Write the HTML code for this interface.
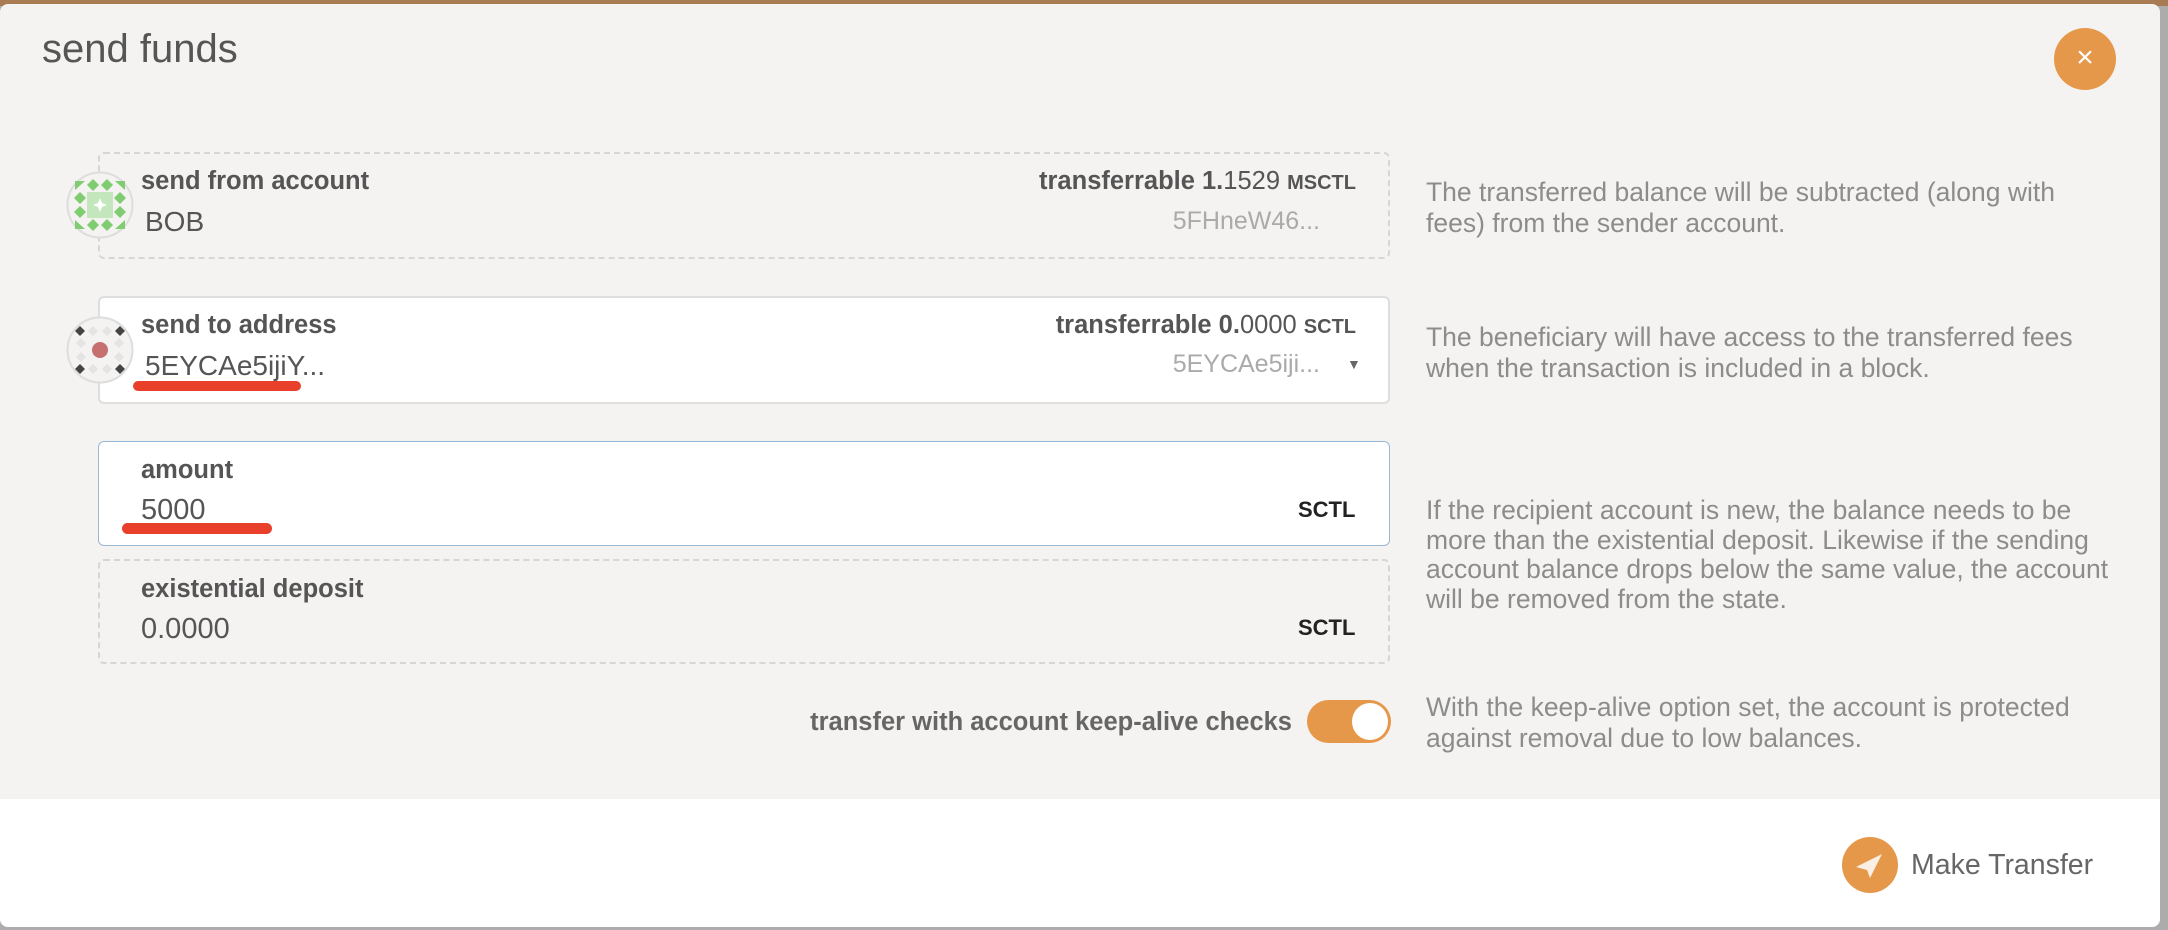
<!DOCTYPE html>
<html><head><meta charset="utf-8"><style>
*{margin:0;padding:0;box-sizing:border-box}
body{width:2168px;height:930px;overflow:hidden;background:#acacac;font-family:"Liberation Sans",sans-serif;position:relative}
.abs{position:absolute;white-space:nowrap}
.topbar{left:0;top:0;width:2168px;height:6px;background:#a87b52}
.modal{left:0;top:4px;width:2160px;height:923px;background:#f4f3f1;border-radius:8px;overflow:hidden}
.footer{left:0;top:795px;width:2160px;height:128px;background:#fff}
.title{left:42px;top:27px;font-size:40px;color:#555;}
.close{left:2054px;top:28px;width:62px;height:62px;border-radius:50%;background:#e5984a;color:#fff;font-size:30px;text-align:center;line-height:60px}
.box{left:98px;width:1292px;border-radius:6px}
.dash{border:2px dashed #d6d6d6}
.solid{background:#fff;border:2px solid #dedede}
.lbl{font-size:25.5px;font-weight:bold;color:#555}
.val{font-size:28px;color:#555}
.help{left:1426px;font-size:26.5px;line-height:30.5px;color:#8c8c8c;width:740px;white-space:normal}
.red{background:#e8402a;border-radius:6px;height:10px}
.unit{font-size:20px;font-weight:bold}
</style></head><body>
<div class="abs topbar"></div>
<div class="abs modal">
  <div class="abs footer"></div>
</div>
<div class="abs title">send funds</div>
<div class="abs close">×</div>

<!-- box1 -->
<div class="abs box dash" style="top:152px;height:107px"></div>
<div class="abs lbl" style="left:141px;top:167px">send from account</div>
<div class="abs val" style="left:145px;top:206px">BOB</div>
<div class="abs lbl" style="right:812px;top:167px;color:#555">transferrable 1.<span style="font-weight:normal">1529</span> <span class="unit">MSCTL</span></div>
<div class="abs" style="right:848px;top:207px;font-size:25px;color:#aaa">5FHneW46...</div>
<svg class="abs" style="left:66px;top:171px" width="68" height="68" viewBox="0 0 68 68">
<circle cx="34" cy="34" r="32.5" fill="#f4f3f1" stroke="#ddd" stroke-width="2"/>
<rect x="21" y="21" width="26" height="26" fill="#c4e6bd"/>
<g fill="#80cc70">
<path d="M27 8l6 6-6 6-6-6z"/><path d="M41 8l6 6-6 6-6-6z"/>
<path d="M27 48l6 6-6 6-6-6z"/><path d="M41 48l6 6-6 6-6-6z"/>
<path d="M14 21l6 6-6 6-6-6z"/><path d="M14 35l6 6-6 6-6-6z"/>
<path d="M54 21l6 6-6 6-6-6z"/><path d="M54 35l6 6-6 6-6-6z"/>
<path d="M9 10h10l-10 9z"/><path d="M59 10h-10l10 9z"/><path d="M9 58h10l-10-9z"/><path d="M59 58h-10l10-9z"/>
</g>
<path d="M34 27l2 5 5 2-5 2-2 5-2-5-5-2 5-2z" fill="#fff"/>
</svg>

<!-- box2 -->
<div class="abs box solid" style="top:296px;height:108px"></div>
<div class="abs lbl" style="left:141px;top:311px">send to address</div>
<div class="abs val" style="left:145px;top:350px">5EYCAe5ijiY...</div>
<div class="abs red" style="left:133px;top:381px;width:168px"></div>
<div class="abs lbl" style="right:812px;top:311px">transferrable 0.<span style="font-weight:normal">0000</span> <span class="unit">SCTL</span></div>
<div class="abs" style="right:848px;top:350px;font-size:25px;color:#aaa">5EYCAe5iji...</div>
<div class="abs" style="left:1347px;top:356px;font-size:14px;color:#666">▼</div>
<svg class="abs" style="left:66px;top:316px" width="68" height="68" viewBox="0 0 68 68">
<circle cx="34" cy="34" r="32.5" fill="#f4f3f1" stroke="#ddd" stroke-width="2"/>
<g fill="#e4e4e4">
<path d="M27 10l5 5-5 5-5-5z"/><path d="M41 10l5 5-5 5-5-5z"/>
<path d="M27 48l5 5-5 5-5-5z"/><path d="M41 48l5 5-5 5-5-5z"/>
<path d="M15 22l5 5-5 5-5-5z"/><path d="M15 36l5 5-5 5-5-5z"/>
<path d="M53 22l5 5-5 5-5-5z"/><path d="M53 36l5 5-5 5-5-5z"/>
</g>
<g fill="#444">
<path d="M14 10l5 5-5 5-5-5z"/><path d="M54 10l5 5-5 5-5-5z"/>
<path d="M14 48l5 5-5 5-5-5z"/><path d="M54 48l5 5-5 5-5-5z"/>
</g>
<circle cx="34" cy="34" r="8" fill="#c77070"/>
</svg>

<!-- amount -->
<div class="abs box" style="top:441px;height:105px;background:#fff;border:1.5px solid #96b8d6"></div>
<div class="abs lbl" style="left:141px;top:456px">amount</div>
<div class="abs val" style="left:141px;top:494px;font-size:29px">5000</div>
<div class="abs red" style="left:122px;top:523px;width:150px;height:11px"></div>
<div class="abs" style="left:1298px;top:497px;font-size:22px;font-weight:bold;color:#222">SCTL</div>

<!-- existential -->
<div class="abs box dash" style="top:559px;height:105px"></div>
<div class="abs lbl" style="left:141px;top:575px">existential deposit</div>
<div class="abs val" style="left:141px;top:613px;font-size:29px">0.0000</div>
<div class="abs" style="left:1298px;top:615px;font-size:22px;font-weight:bold;color:#222">SCTL</div>

<!-- toggle -->
<div class="abs lbl" style="right:876px;top:708px;color:#666">transfer with account keep-alive checks</div>
<div class="abs" style="left:1307px;top:700px;width:84px;height:43px;border-radius:22px;background:#e5984a"></div>
<div class="abs" style="left:1352px;top:703px;width:36px;height:37px;border-radius:50%;background:#fff"></div>

<!-- help -->
<div class="abs help" style="top:177px">The transferred balance will be subtracted (along with<br>fees) from the sender account.</div>
<div class="abs help" style="top:322px">The beneficiary will have access to the transferred fees<br>when the transaction is included in a block.</div>
<div class="abs help" style="top:496px;line-height:29.5px">If the recipient account is new, the balance needs to be<br>more than the existential deposit. Likewise if the sending<br>account balance drops below the same value, the account<br>will be removed from the state.</div>
<div class="abs help" style="top:692px">With the keep-alive option set, the account is protected<br>against removal due to low balances.</div>

<!-- footer button -->
<svg class="abs" style="left:1842px;top:837px" width="56" height="56" viewBox="0 0 56 56">
<circle cx="28" cy="28" r="28" fill="#e5984a"/>
<path d="M14 30l26-13-12 24-3-8z" fill="#fbefe4"/>
</svg>
<div class="abs" style="left:1911px;top:849px;font-size:28.5px;color:#666">Make Transfer</div>
</body></html>
